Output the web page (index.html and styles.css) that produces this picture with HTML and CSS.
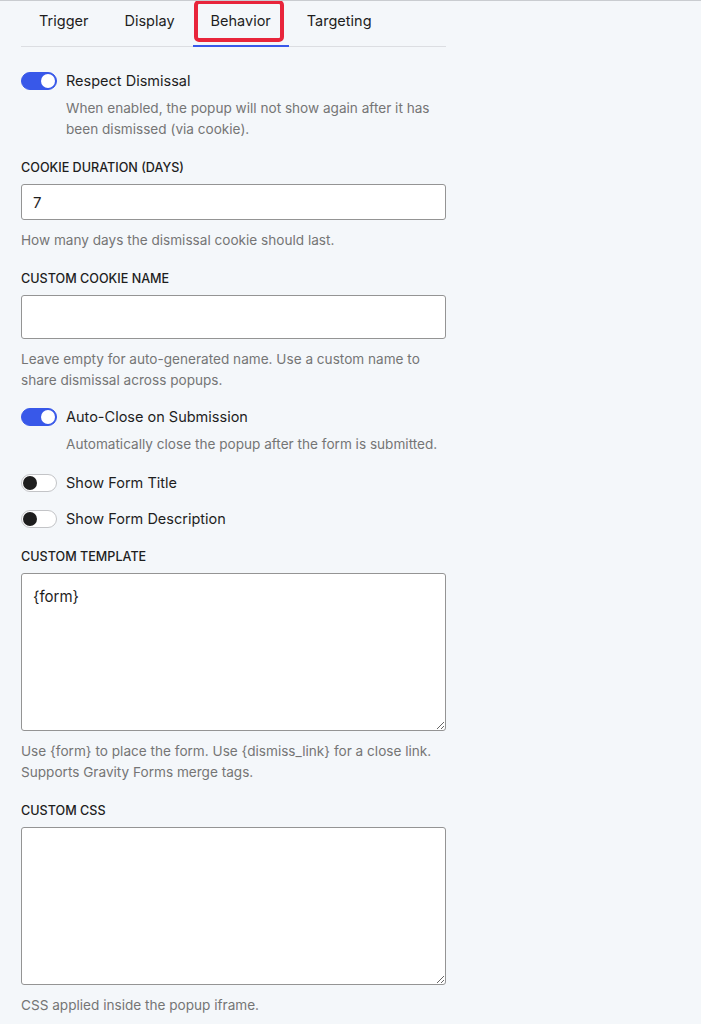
FILE: index.html
```html
<!DOCTYPE html>
<html lang="en">
<head>
  <meta charset="UTF-8">
  <title>Popup Behavior Settings</title>
  <meta name="viewport" content="width=device-width, initial-scale=1">
  <link rel="stylesheet" href="styles.css">
</head>
<body>
  <div class="panel">

    <nav class="tabs">
      <span class="tab">Trigger</span>
      <span class="tab">Display</span>
      <span class="tab active">Behavior<span class="marker"></span></span>
      <span class="tab">Targeting</span>
    </nav>

    <div class="toggle-field first">
      <div class="toggle-row">
        <span class="toggle on"></span>
        <span class="toggle-label">Respect Dismissal</span>
      </div>
      <p class="toggle-help">When enabled, the popup will not show again after it has been dismissed (via cookie).</p>
    </div>

    <div class="field">
      <label class="field-label" for="cookie_days">Cookie Duration (Days)</label>
      <input type="text" id="cookie_days" class="text-input" value="7">
      <p class="help">How many days the dismissal cookie should last.</p>
    </div>

    <div class="field">
      <label class="field-label" for="cookie_name">Custom Cookie Name</label>
      <input type="text" id="cookie_name" class="text-input tall" value="">
      <p class="help">Leave empty for auto-generated name. Use a custom name to share dismissal across popups.</p>
    </div>

    <div class="toggle-field autoclose">
      <div class="toggle-row">
        <span class="toggle on"></span>
        <span class="toggle-label">Auto-Close on Submission</span>
      </div>
      <p class="toggle-help">Automatically close the popup after the form is submitted.</p>
    </div>

    <div class="toggle-field show-title">
      <div class="toggle-row">
        <span class="toggle"></span>
        <span class="toggle-label">Show Form Title</span>
      </div>
    </div>

    <div class="toggle-field show-desc">
      <div class="toggle-row">
        <span class="toggle"></span>
        <span class="toggle-label">Show Form Description</span>
      </div>
    </div>

    <div class="field template">
      <label class="field-label" for="template">Custom Template</label>
      <textarea id="template" class="text-area">{form}</textarea>
      <p class="help">Use {form} to place the form. Use {dismiss_link} for a close link. Supports Gravity Forms merge tags.</p>
    </div>

    <div class="field">
      <label class="field-label" for="custom_css">Custom CSS</label>
      <textarea id="custom_css" class="text-area"></textarea>
      <p class="help">CSS applied inside the popup iframe.</p>
    </div>

  </div>
</body>
</html>
```

FILE: styles.css
```css
body {
  margin: 0;
  border-top: 1px solid #c9ccd0;
  background: #f4f7fa;
  font-family: Inter, "Noto Sans", sans-serif;
  color: #1e1e1e;
}
.panel {
  width: 425px;
  padding: 0 21px;
}
.tabs {
  display: flex;
  border-bottom: 1px solid #dcdee2;
}
.tab {
  position: relative;
  padding: 9px 18px 13px;
  margin-bottom: -1px;
  font-size: 14.5px;
  line-height: 22px;
  border-bottom: 2px solid transparent;
}
.tab.active {
  border-bottom-color: #3858e9;
}
.tab .marker {
  position: absolute;
  left: 1px;
  top: -1px;
  width: 90px;
  height: 42px;
  box-sizing: border-box;
  border: 4px solid #e8253b;
  border-radius: 5px;
}
.toggle-field {
  margin-top: 17px;
}
.toggle-field.first {
  margin-top: 23px;
}
.toggle-field.autoclose {
  margin-top: 15px;
}
.toggle-field.show-desc {
  margin-top: 14px;
}
.toggle-row {
  display: flex;
  align-items: center;
  gap: 9px;
  height: 22px;
}
.toggle {
  position: relative;
  width: 36px;
  height: 18px;
  box-sizing: border-box;
  border: 1px solid #c3c4c7;
  border-radius: 9px;
  background: #fff;
}
.toggle::after {
  content: "";
  position: absolute;
  top: 1px;
  left: 1px;
  width: 14px;
  height: 14px;
  border-radius: 50%;
  background: #1e1e1e;
}
.toggle.on {
  border-color: #3858e9;
  background: #3858e9;
}
.toggle.on::after {
  left: 19px;
  background: #fff;
}
.toggle-label {
  font-size: 14.5px;
  line-height: 22px;
}
.toggle-help {
  margin: 6px 0 0 45px;
  font-size: 13.6px;
  line-height: 21px;
  color: #757575;
}
.field {
  margin-top: 18px;
}
.field.template {
  margin-top: 17px;
}
.field-label {
  display: block;
  padding-top: 2px;
  margin-bottom: 8px;
  font-size: 12.6px;
  line-height: 16px;
  font-weight: 500;
  text-transform: uppercase;
}
.text-input,
.text-area {
  display: block;
  width: 100%;
  box-sizing: border-box;
  border: 1px solid #949494;
  border-radius: 3px;
  background: #fff;
  font-family: inherit;
  font-size: 15px;
  color: #1e1e1e;
}
.text-input {
  height: 36px;
  padding: 0 11px;
}
.text-input.tall {
  height: 44px;
}
.text-area {
  height: 158px;
  padding: 12px 11px;
  line-height: 22px;
}
.help {
  margin: 10px 0 0;
  font-size: 13.6px;
  line-height: 21px;
  color: #757575;
}
```
